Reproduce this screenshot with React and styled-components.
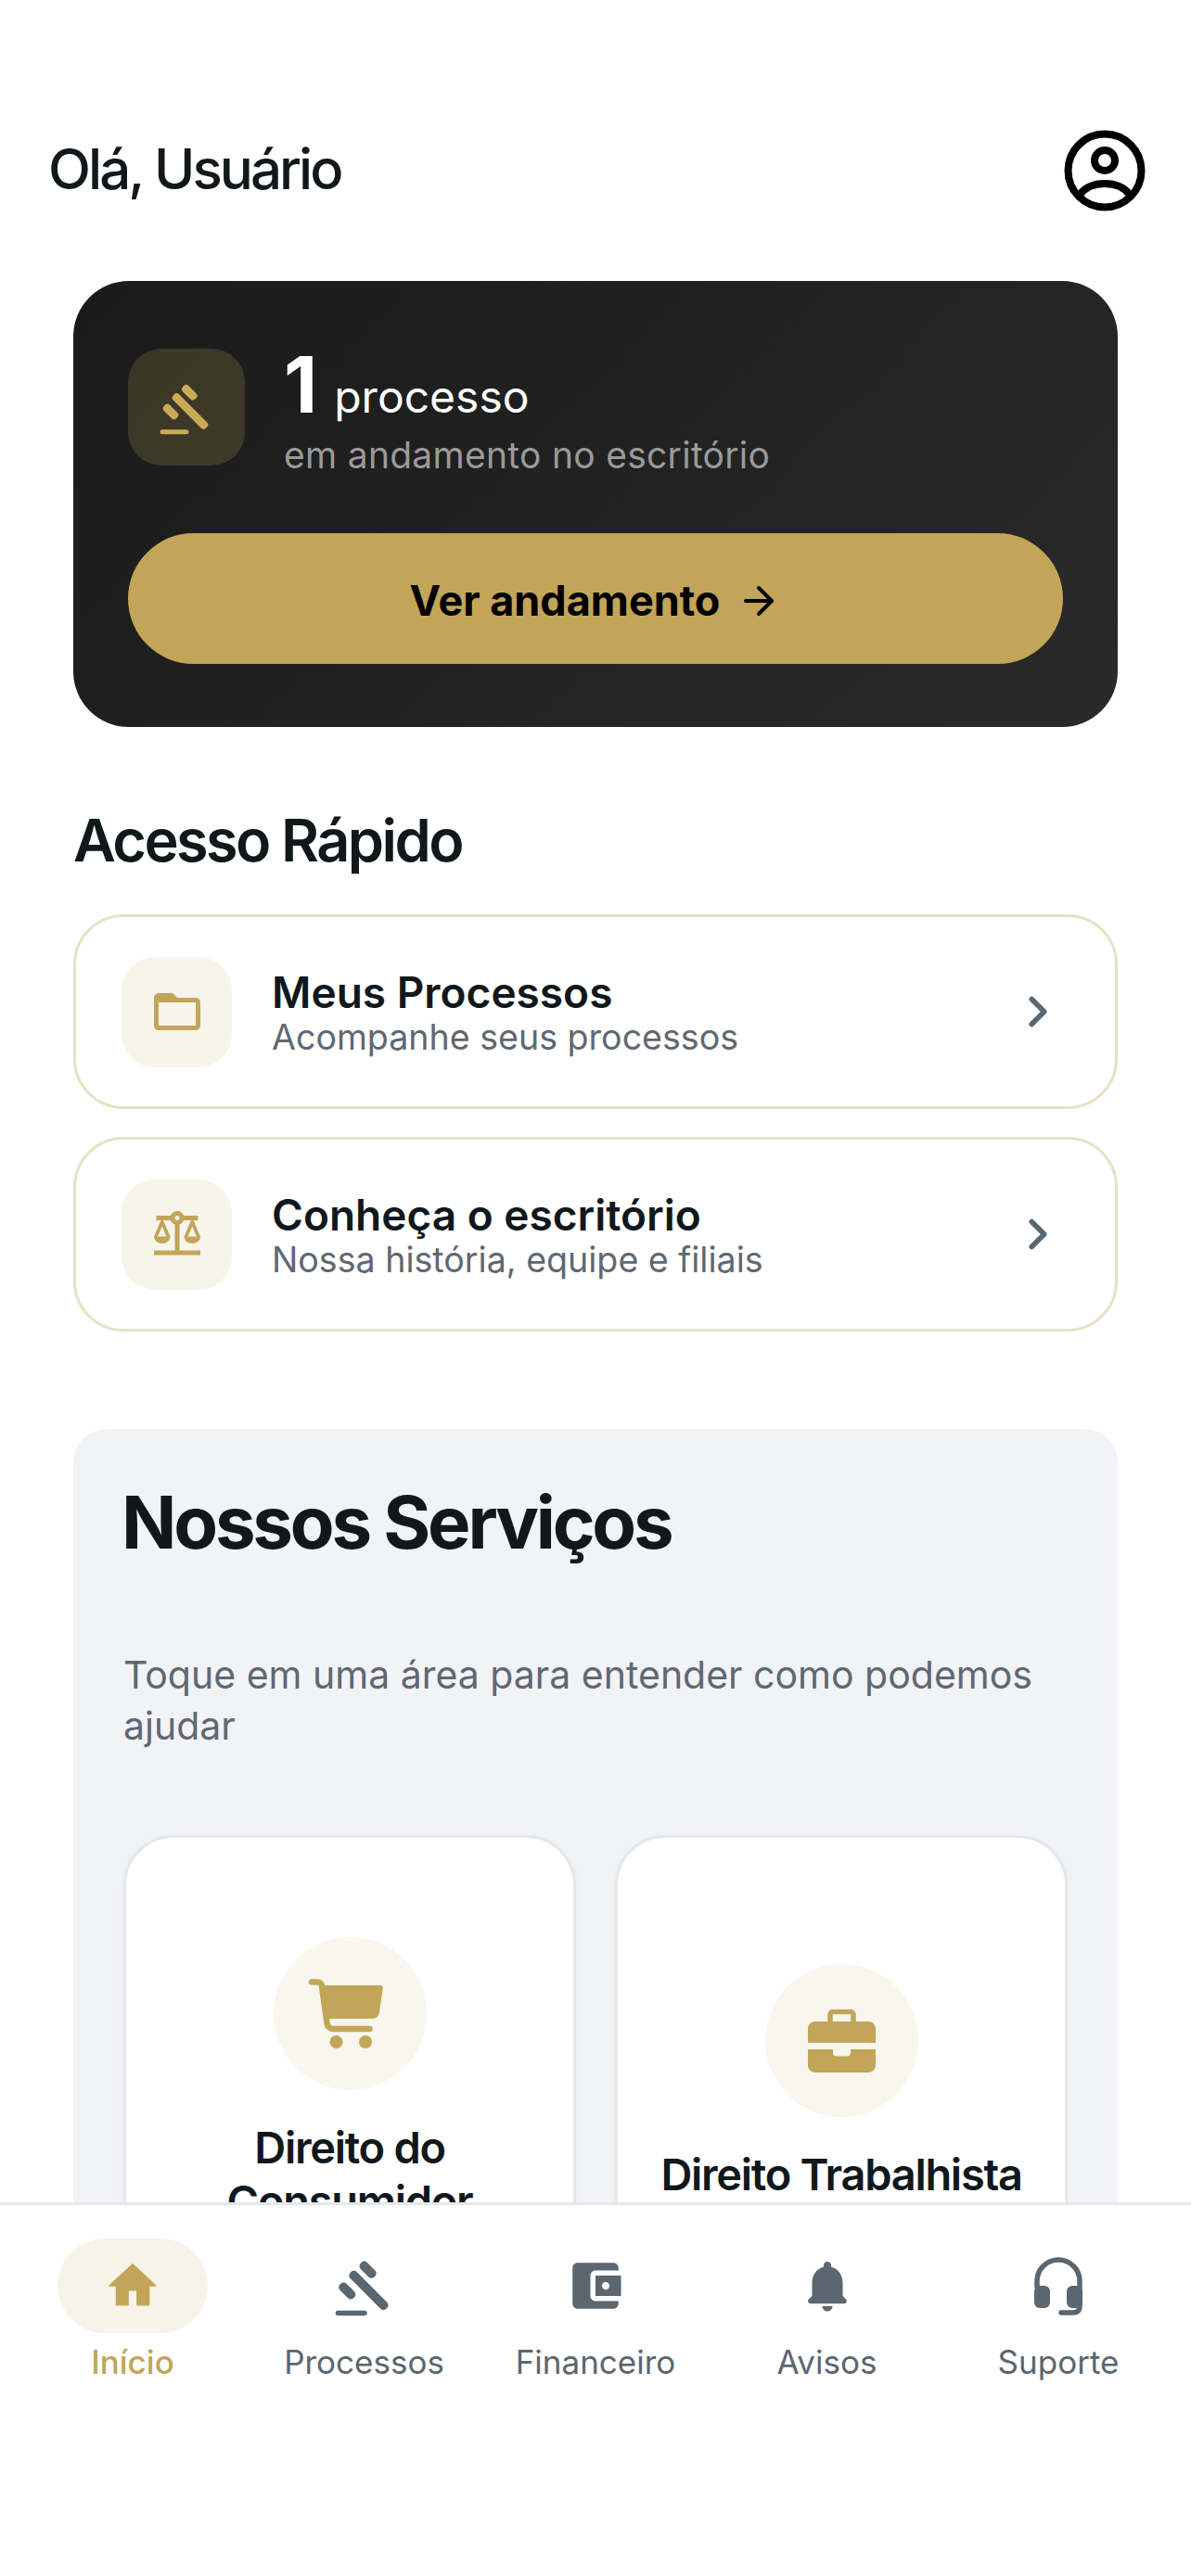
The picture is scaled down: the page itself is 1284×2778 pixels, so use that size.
import React from "react";
import styled, { createGlobalStyle } from "styled-components";
import { ArrowRight, ChevronRight } from "lucide-react";

const Global = createGlobalStyle`
  html, body { margin: 0; padding: 0; background: #fff; }
  * { box-sizing: border-box; }
  body { font-family: Inter, "Noto Sans", sans-serif; color: #11181c; }
`;

const Screen = styled.div`
  width: 1284px; height: 2778px; display: flex; flex-direction: column; overflow: hidden; background: #fff;
`;
const Main = styled.main`
  flex: 1; min-height: 0; overflow: hidden; display: flex; flex-direction: column;
`;
const Header = styled.header`
  display: flex; align-items: center; justify-content: space-between;
  padding: 139px 45px 75px 52px; height: 303px;
`;
const Greeting = styled.h1`
  margin: -3px 0 0; font-size: 60px; line-height: 72px; font-weight: 500; letter-spacing: -2.95px; color: #11181c;
`;
const Content = styled.div`
  padding: 0 79px; display: flex; flex-direction: column;
`;
const HeroCard = styled.section`
  height: 481px; border-radius: 60px; padding: 73px 59px 68px;
  background: linear-gradient(135deg, #1a1a1a 0%, #2a2a2a 100%);
  display: flex; flex-direction: column; justify-content: space-between;
`;
const HeroRow = styled.div`
  display: flex; gap: 42px; align-items: flex-start;
`;
const HeroIcon = styled.div`
  width: 126px; height: 126px; border-radius: 36px; background: rgba(194,165,88,.2);
  display: flex; align-items: center; justify-content: center; color: #c9aa57;
`;
const HeroText = styled.div`
  display: flex; flex-direction: column; margin-top: -3px;
`;
const CountLine = styled.div`
  display: flex; align-items: baseline; gap: 18px; height: 84px; color: #fff;
`;
const Count = styled.span`
  font-size: 84px; line-height: 84px; font-weight: 700;
`;
const CountUnit = styled.span`
  font-size: 48px; line-height: 84px; font-weight: 400;
`;
const HeroSub = styled.div`
  font-size: 39px; line-height: 48px; margin-top: 10px; letter-spacing: .28px; color: #9a9a9a;
`;
const PrimaryButton = styled.button`
  height: 141px; width: 100%; border: 0; border-radius: 71px; background: #c2a558; color: #000;
  display: flex; align-items: center; justify-content: center; gap: 18px; padding: 4px 0 0;
  font: 700 45px/54px Inter, sans-serif; letter-spacing: 0;
`;
const SectionTitle = styled.h2`
  margin: 83px 0 41px; font-size: 63px; line-height: 78px; font-weight: 600; letter-spacing: -2.6px; color: #11181c;
`;
const LinkList = styled.div`
  display: flex; flex-direction: column; gap: 30px;
`;
const LinkCard = styled.div`
  height: 210px; border: 3px solid #e9e1c5; border-radius: 54px; background: #fff;
  display: flex; align-items: center; padding: 0 56px 0 49px; gap: 43px;
`;
const LinkIcon = styled.div`
  width: 119px; height: 119px; border-radius: 36px; background: #f7f4ea; color: #c2a558;
  display: flex; align-items: center; justify-content: center; flex: none;
`;
const LinkText = styled.div`
  flex: 1; display: flex; flex-direction: column; padding-top: 6px;
`;
const LinkTitle = styled.div`
  font-size: 46px; line-height: 49px; font-weight: 600; color: #11181c;
`;
const LinkSub = styled.div`
  font-size: 37.6px; line-height: 48px; color: #5f6872;
`;
const Chevron = styled(ChevronRight)`
  color: #5a6670; flex: none;
`;
const ServicesPanel = styled.section`
  margin-top: 105px; background: #f2f3f7; border-radius: 36px; padding: 54px;
  display: flex; flex-direction: column;
`;
const ServicesTitle = styled.h2`
  margin: 0 0 0 -2px; font-size: 78px; line-height: 94px; font-weight: 700; letter-spacing: -3.2px; color: #11181c;
`;
const ServicesSub = styled.p`
  margin: 90px 0 0; font-size: 41px; line-height: 55px; color: #5f6872;
`;
const ServiceGrid = styled.div`
  display: grid; grid-template-columns: 1fr 1fr; gap: 42px; margin-top: 90px;
`;
const ServiceCard = styled.div`
  border: 3px solid #e5e7eb; border-radius: 54px; background: #fff;
  box-shadow: 0 3px 9px rgba(0,0,0,.04);
  display: flex; flex-direction: column; align-items: center; justify-content: center; padding: 107px 24px;
`;
const ServiceIcon = styled.div`
  width: 165px; height: 165px; border-radius: 50%; background: #f9f6ee; color: #c2a558;
  display: flex; align-items: center; justify-content: center;
`;
const ServiceName = styled.div`
  margin-top: 33px; font-size: 47px; line-height: 58px; font-weight: 600; letter-spacing: -1.3px; text-align: center; color: #11181c;
`;
const BottomNav = styled.nav`
  flex: none; height: 403px; border-top: 3px solid #e5e7eb; background: #fff;
  display: grid; grid-template-columns: repeat(5, 249.5px); justify-content: center; align-content: start; padding-top: 36px;
`;
const NavItem = styled.div`
  display: flex; flex-direction: column; align-items: center; gap: 9px;
  color: ${p => (p.$active ? "#c2a558" : "#5a6670")};
`;
const NavIcon = styled.div`
  width: 162px; height: 102px; border-radius: 51px; display: flex; align-items: center; justify-content: center;
  background: ${p => (p.$active ? "#f7f3e9" : "transparent")};
`;
const NavLabel = styled.span`
  font-size: 35px; line-height: 44px; font-weight: ${p => (p.$active ? 500 : 400)};
`;

const Gavel = ({ size }) => (
  <svg width={size} height={size} viewBox="0 0 24 24" fill="currentColor">
    <rect x="3.6" y="12" width="20" height="3.6" rx="1.6" transform="rotate(45 13.6 13.8)" />
    <rect x="9.5" y="3.9" width="7.6" height="3.6" rx="1.6" transform="rotate(45 13.3 5.7)" />
    <rect x="1.4" y="12.2" width="7.6" height="3.6" rx="1.6" transform="rotate(45 5.2 14)" />
    <rect x=".6" y="21.700" width="12.400" height="2" rx="1" />
  </svg>
);
const Folder = () => (
  <svg width="60" height="60" viewBox="0 0 24 24" fill="currentColor">
    <path d="M20 6h-8l-2-2H4c-1.1 0-1.99.9-1.99 2L2 18c0 1.1.9 2 2 2h16c1.1 0 2-.9 2-2V8c0-1.1-.9-2-2-2m0 12H4V8h16z" />
  </svg>
);
const Balance = () => (
  <svg width="60" height="60" viewBox="0 0 24 24" fill="currentColor">
    <path d="M13 7.83c.85-.3 1.53-.98 1.83-1.83H18l-3 7c0 1.66 1.57 3 3.5 3s3.5-1.34 3.5-3l-3-7h2V4h-6.17c-.41-1.17-1.52-2-2.83-2s-2.42.83-2.83 2H3v2h2l-3 7c0 1.66 1.57 3 3.5 3S9 14.66 9 13L6 6h3.17c.3.85.98 1.53 1.83 1.83V19H2v2h20v-2h-9V7.83zM20.37 13h-3.74l1.87-4.36L20.37 13zm-13 0H3.63L5.5 8.64 7.37 13zM12 6c-.55 0-1-.45-1-1 0-.55.45-1 1-1s1 .45 1 1c0 .55-.45 1-1 1z" />
  </svg>
);
const Profile = () => (
  <svg width="96" height="96" viewBox="0 0 96 96" fill="none" stroke="#000" strokeWidth="8" strokeLinecap="round">
    <circle cx="48" cy="48" r="39.5" />
    <circle cx="48" cy="37" r="11" />
    <path d="M21 74C27 66 37 62 48 62s21 4 27 12" />
  </svg>
);
const Cart = () => (
  <svg width="88" height="76" viewBox="0 0 88 76" fill="currentColor">
    <path d="M3 3.500h6.500c2.500 0 4 1.500 4.400 4l5.600 40c.5 4 3 6.500 7 6.500h39" fill="none" stroke="currentColor" strokeWidth="6.500" strokeLinecap="round" />
    <path d="M15 7h62c2 0 3 1.200 2.800 3L76 36c-.7 4.500-3.500 7-8 7H20z" />
    <circle cx="29.500" cy="68" r="7" />
    <circle cx="61" cy="68" r="7" />
  </svg>
);
const Briefcase = () => (
  <svg width="73" height="68" viewBox="0 0 73 68" fill="currentColor">
    <path d="M24 14V6c0-2 1.500-3.500 3.500-3.500h18c2 0 3.500 1.500 3.500 3.500v8" fill="none" stroke="currentColor" strokeWidth="5.500" />
    <path d="M8 13h57c4.500 0 8 3.500 8 8v15H0V21c0-4.500 3.500-8 8-8z" />
    <path d="M0 43h27v4c0 2 1.500 3.500 3.500 3.500h12c2 0 3.500-1.500 3.500-3.500v-4h27v17c0 4.500-3.500 8-8 8H8c-4.500 0-8-3.500-8-8z" />
  </svg>
);
const Home = () => (
  <svg width="64" height="64" viewBox="0 0 24 24" fill="currentColor" stroke="currentColor" strokeWidth=".5" strokeLinejoin="round">
    <path d="M10.200 19.800v-6h3.600v6h4.800v-7.800h2.800L12 3.300 2.600 12h2.800v7.800z" />
  </svg>
);
const Wallet = () => (
  <svg width="66" height="66" viewBox="0 0 24 24" fill="currentColor">
    <path d="M21 18v1c0 1.100-.9 2-2 2H5c-1.110 0-2-.9-2-2V5c0-1.100.89-2 2-2h14c1.100 0 2 .9 2 2v1h-9c-1.110 0-2 .9-2 2v8c0 1.100.89 2 2 2h9zm-9-2h10V8H12v8zm4-2.500c-.83 0-1.500-.67-1.500-1.500s.67-1.500 1.500-1.500 1.500.67 1.500 1.500-.67 1.500-1.500 1.500z" />
  </svg>
);
const Bell = () => (
  <svg width="66" height="66" viewBox="0 0 24 24" fill="currentColor">
    <path d="M12 22c1.100 0 2-.9 2-2h-4c0 1.100.9 2 2 2zm6-6v-5c0-3.070-1.630-5.640-4.500-6.320V4c0-.83-.67-1.500-1.500-1.500s-1.500.67-1.500 1.500v.68C7.640 5.360 6 7.920 6 11v5l-1.290 1.290c-.63.63-.19 1.710.7 1.710h13.170c.89 0 1.340-1.080.71-1.710L18 16z" />
  </svg>
);
const Headset = () => (
  <svg width="52" height="63" viewBox="0 0 52 63" fill="currentColor">
    <path d="M3 32V26a23 23 0 0 1 46 0v27q0 7-7 7H29" fill="none" stroke="currentColor" strokeWidth="5.500" strokeLinecap="round" />
    <rect x="0" y="31" width="17" height="24" rx="6" />
    <rect x="35" y="31" width="17" height="24" rx="6" />
  </svg>
);

const links = [
  { title: "Meus Processos", sub: "Acompanhe seus processos", icon: <Folder /> },
  { title: "Conheça o escritório", sub: "Nossa história, equipe e filiais", icon: <Balance /> },
];
const services = [
  { name: "Direito do Consumidor", icon: <Cart /> },
  { name: "Direito Trabalhista", icon: <Briefcase /> },
];
const nav = [
  { label: "Início", icon: <Home />, active: true },
  { label: "Processos", icon: <Gavel size={66} /> },
  { label: "Financeiro", icon: <Wallet /> },
  { label: "Avisos", icon: <Bell /> },
  { label: "Suporte", icon: <Headset /> },
];

export default function App() {
  return (
    <Screen>
      <Global />
      <Main>
        <Header>
          <Greeting>Olá, Usuário</Greeting>
          <Profile />
        </Header>
        <Content>
          <HeroCard>
            <HeroRow>
              <HeroIcon><Gavel size={60} /></HeroIcon>
              <HeroText>
                <CountLine>
                  <Count>1</Count>
                  <CountUnit>processo</CountUnit>
                </CountLine>
                <HeroSub>em andamento no escritório</HeroSub>
              </HeroText>
            </HeroRow>
            <PrimaryButton>
              Ver andamento
              <ArrowRight size={48} strokeWidth={2} />
            </PrimaryButton>
          </HeroCard>
          <SectionTitle>Acesso Rápido</SectionTitle>
          <LinkList>
            {links.map(l => (
              <LinkCard key={l.title}>
                <LinkIcon>{l.icon}</LinkIcon>
                <LinkText>
                  <LinkTitle>{l.title}</LinkTitle>
                  <LinkSub>{l.sub}</LinkSub>
                </LinkText>
                <Chevron size={54} strokeWidth={2.5} />
              </LinkCard>
            ))}
          </LinkList>
          <ServicesPanel>
            <ServicesTitle>Nossos Serviços</ServicesTitle>
            <ServicesSub>Toque em uma área para entender como podemos ajudar</ServicesSub>
            <ServiceGrid>
              {services.map(s => (
                <ServiceCard key={s.name}>
                  <ServiceIcon>{s.icon}</ServiceIcon>
                  <ServiceName>{s.name}</ServiceName>
                </ServiceCard>
              ))}
            </ServiceGrid>
          </ServicesPanel>
        </Content>
      </Main>
      <BottomNav>
        {nav.map(n => (
          <NavItem key={n.label} $active={n.active}>
            <NavIcon $active={n.active}>{n.icon}</NavIcon>
            <NavLabel $active={n.active}>{n.label}</NavLabel>
          </NavItem>
        ))}
      </BottomNav>
    </Screen>
  );
}
